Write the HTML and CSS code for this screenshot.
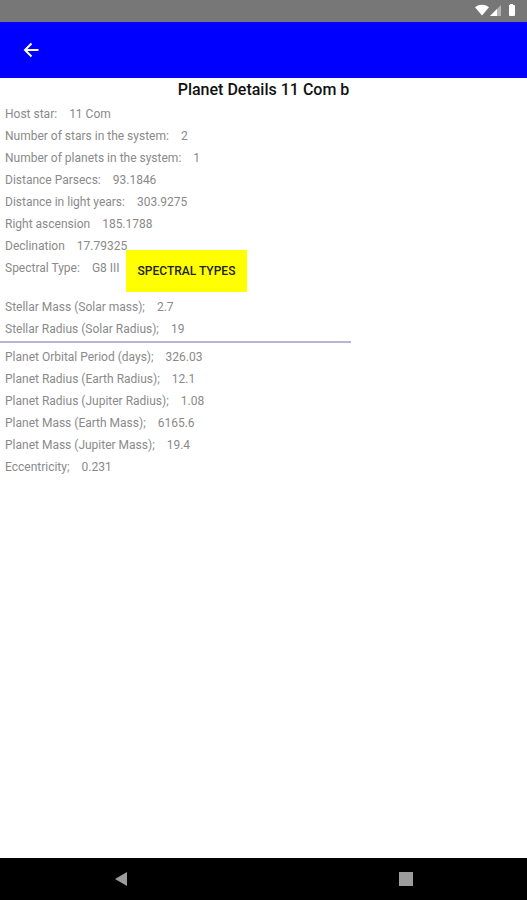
FILE: index.html
```html
<!DOCTYPE html>
<html lang="en">
<head>
<meta charset="utf-8">
<meta name="viewport" content="width=device-width, initial-scale=1">
<title>Planet Details</title>
<link rel="stylesheet" href="styles.css">
</head>
<body>
<div class="status-bar">
  <svg class="status-icons" width="42" height="14" viewBox="0 0 42 14" aria-hidden="true">
    <path d="M1 4.200C5 .9 11 .9 15 4.200L8 12.500z" fill="#fff"/>
    <path d="M16 13L27 2v11z" fill="#b4b4b4"/>
    <path d="M16 13L23 6v7z" fill="#fff"/>
    <path d="M35 2h1V1h3v1h1q1 0 1 1v9q0 1-1 1h-4q-1 0-1-1z" fill="#fff"/>
  </svg>
</div>
<header class="app-bar">
  <button class="back" type="button" aria-label="Back">
    <svg width="16" height="16" viewBox="0 0 16 16" fill="none" stroke="#fff" stroke-width="2" aria-hidden="true">
      <path d="M15.500 8H2M8.500 1.500L2 8l6.500 6.500"/>
    </svg>
  </button>
</header>
<main class="content">
  <h1 class="title">Planet Details 11 Com b</h1>
  <dl class="details">
    <div class="row"><dt>Host star:</dt><dd>11 Com</dd></div>
    <div class="row"><dt>Number of stars in the system:</dt><dd>2</dd></div>
    <div class="row"><dt>Number of planets in the system:</dt><dd>1</dd></div>
    <div class="row"><dt>Distance Parsecs:</dt><dd>93.1846</dd></div>
    <div class="row"><dt>Distance in light years:</dt><dd>303.9275</dd></div>
    <div class="row"><dt>Right ascension</dt><dd>185.1788</dd></div>
    <div class="row"><dt>Declination</dt><dd>17.79325</dd></div>
    <div class="row"><dt>Spectral Type:</dt><dd>G8 III</dd><dd class="action"><button class="types" type="button">SPECTRAL TYPES</button></dd></div>
    <div class="row"><dt>Stellar Mass (Solar mass);</dt><dd>2.7</dd></div>
    <div class="row"><dt>Stellar Radius (Solar Radius);</dt><dd>19</dd></div>
  </dl>
  <hr class="divider">
  <dl class="details">
    <div class="row"><dt>Planet Orbital Period (days);</dt><dd>326.03</dd></div>
    <div class="row"><dt>Planet Radius (Earth Radius);</dt><dd>12.1</dd></div>
    <div class="row"><dt>Planet Radius (Jupiter Radius);</dt><dd>1.08</dd></div>
    <div class="row"><dt>Planet Mass (Earth Mass);</dt><dd>6165.6</dd></div>
    <div class="row"><dt>Planet Mass (Jupiter Mass);</dt><dd>19.4</dd></div>
    <div class="row"><dt>Eccentricity;</dt><dd>0.231</dd></div>
  </dl>
</main>
<nav class="nav-bar" aria-label="System">
  <button type="button" aria-label="System back"><svg width="14" height="14" viewBox="0 0 14 14" aria-hidden="true"><path d="M13 0v14L1 7z" fill="#9c9c9c"/></svg></button>
  <button type="button" aria-label="Recent apps"><svg width="14" height="14" viewBox="0 0 14 14" aria-hidden="true"><path d="M0 0h14v14H0z" fill="#9c9c9c"/></svg></button>
</nav>
</body>
</html>
```
FILE: styles.css
```css
* {
  box-sizing: border-box;
}

body {
  margin: 0;
  min-height: 100vh;
  display: flex;
  flex-direction: column;
  background: #fff;
  color: #8a8a8a;
  font: 12px/22px Roboto, sans-serif;
}

button {
  padding: 0;
  border: 0;
  background: none;
  font-family: inherit;
}

svg {
  display: block;
}

.status-bar {
  display: flex;
  justify-content: flex-end;
  height: 22px;
  padding: 3px 11px 0 0;
  background: #777;
}

.app-bar {
  display: flex;
  align-items: center;
  height: 56px;
  padding-left: 23px;
  background: #00f;
}

.content {
  flex: 1;
}

.title {
  margin: 0;
  padding-bottom: 1px;
  color: #111;
  font-size: 16px;
  font-weight: 500;
  line-height: 24px;
  text-align: center;
}

.details {
  margin: 0;
}

.row {
  display: flex;
  align-items: flex-start;
  gap: 12px;
  padding-left: 5px;
}

dd {
  margin: 0;
}

.action {
  margin: -7px 0 4px -6px;
}

.types {
  display: block;
  height: 42px;
  padding: 0 12px;
  background: #ff0;
  color: #222;
  font-size: 12px;
  font-weight: 500;
}

.divider {
  width: 66.6%;
  height: 2px;
  margin: 1px 0 3px;
  border: 0;
  background: #b5b5d8;
}

.nav-bar {
  display: flex;
  justify-content: space-between;
  align-items: center;
  height: 42px;
  padding: 0 21.6%;
  background: #000;
}
```
